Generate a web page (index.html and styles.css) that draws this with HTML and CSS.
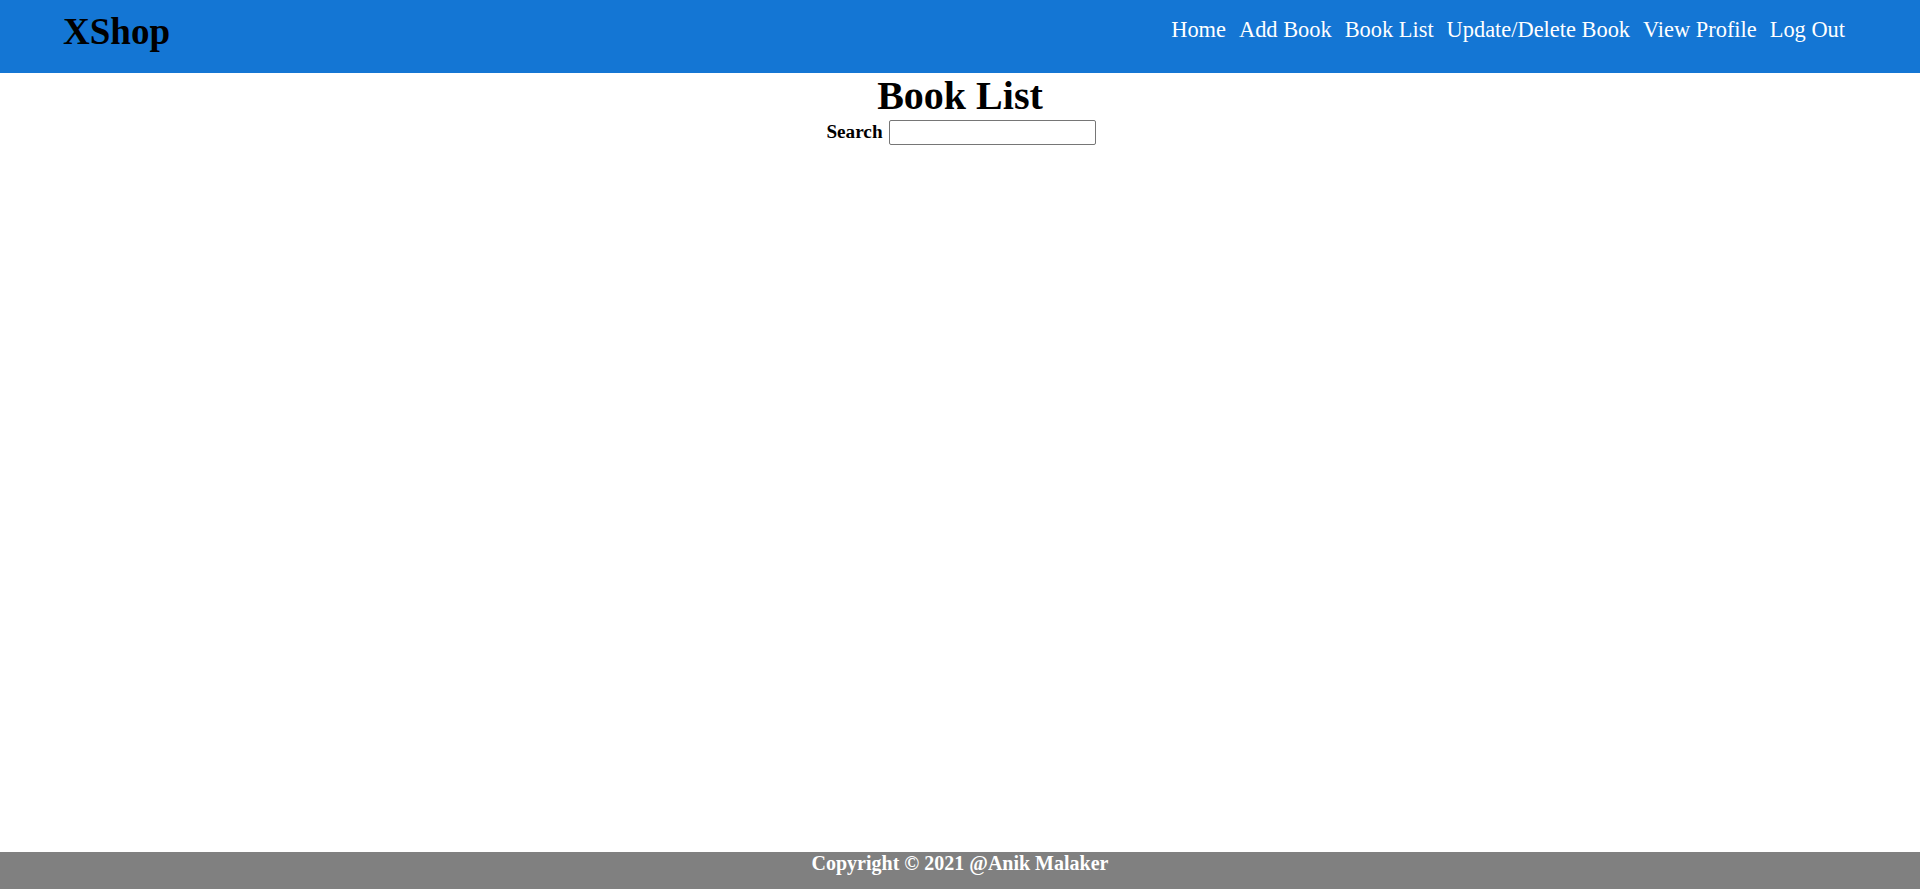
FILE: index.html
```html
<!DOCTYPE html>
<html lang="en">
<head>
<meta charset="utf-8">
<title>Book List</title>
<link rel="stylesheet" href="styles.css">
</head>
<body>
<div class="page">
  <header class="topbar">
    <div class="logo">XShop</div>
    <nav class="nav">
      <a href="#">Home</a>
      <a href="#">Add Book</a>
      <a href="#">Book List</a>
      <a href="#">Update/Delete Book</a>
      <a href="#">View Profile</a>
      <a href="#">Log Out</a>
    </nav>
  </header>
  <main class="content">
    <h1 class="title">Book List</h1>
    <div class="search-row">
      <label class="search-label" for="q">Search</label>
      <input class="search-input" id="q" type="text">
    </div>
  </main>
  <footer class="footer">Copyright © 2021 @Anik Malaker</footer>
</div>
</body>
</html>
```
FILE: styles.css
```css
html, body {
  margin: 0;
  padding: 0;
}
body {
  font-family: "Liberation Serif", "Times New Roman", serif;
  color: #000;
  background: #fff;
}
.page {
  min-height: 100vh;
  display: flex;
  flex-direction: column;
}
.topbar {
  height: 73px;
  background: #1476d4;
  display: flex;
  justify-content: space-between;
  align-items: flex-start;
  padding: 0 75px 0 63px;
  box-sizing: border-box;
}
.logo {
  font-size: 37px;
  font-weight: bold;
  line-height: 41px;
  margin-top: 11px;
}
.nav {
  display: flex;
  gap: 13px;
  margin-top: 17px;
}
.nav a {
  color: #fff;
  text-decoration: none;
  font-size: 22.4px;
  line-height: 25px;
}
.content {
  flex: 1;
  text-align: center;
}
.title {
  font-size: 40px;
  font-weight: bold;
  margin: 0;
  line-height: 46px;
}
.search-row {
  display: flex;
  justify-content: center;
  align-items: baseline;
  gap: 6px;
  padding-top: 1px;
  padding-left: 2px;
}
.search-label {
  font-size: 19.2px;
  font-weight: bold;
}
.search-input {
  width: 207px;
  height: 25px;
  box-sizing: border-box;
  border: 1px solid #767676;
  border-radius: 2px;
  padding: 1px 2px;
  font-size: 16px;
}
.footer {
  height: 37px;
  box-sizing: border-box;
  background: #808080;
  color: #fff;
  font-weight: bold;
  font-size: 20px;
  text-align: center;
  line-height: 23px;
}
```
